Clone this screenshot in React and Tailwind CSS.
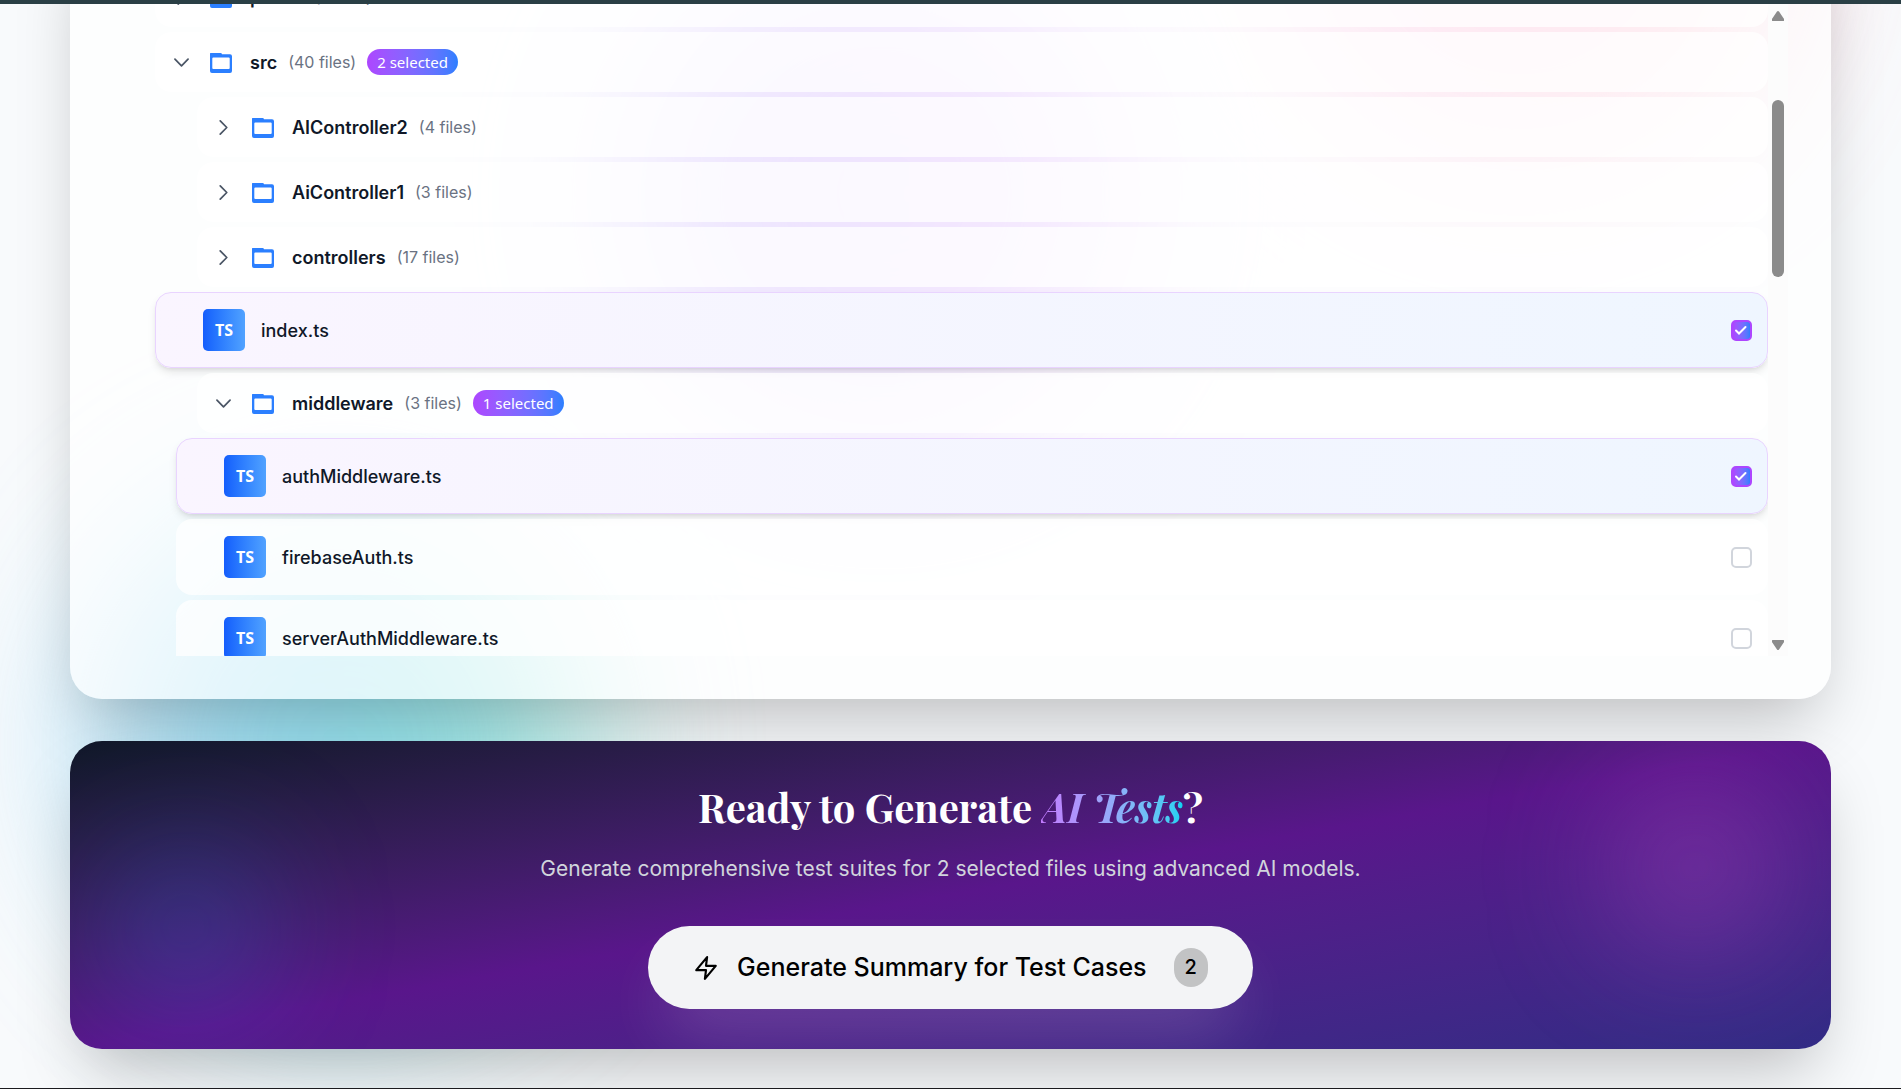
import { useState } from "react";
import { HiOutlineChevronDown, HiOutlineChevronRight } from "react-icons/hi2";

const ENTRIES = [
  { type: "folder", name: "public", count: 5, depth: 0 },
  { type: "folder", name: "src", count: 40, depth: 0, open: true, selected: 2 },
  { type: "folder", name: "AIController2", count: 4, depth: 1 },
  { type: "folder", name: "AiController1", count: 3, depth: 1 },
  { type: "folder", name: "controllers", count: 17, depth: 1 },
  { type: "file", name: "index.ts", depth: 0, checked: true },
  { type: "folder", name: "middleware", count: 3, depth: 1, open: true, selected: 1 },
  { type: "file", name: "authMiddleware.ts", depth: 1, checked: true },
  { type: "file", name: "firebaseAuth.ts", depth: 1 },
  { type: "file", name: "serverAuthMiddleware.ts", depth: 1 },
];

function FolderIcon() {
  return (
    <svg viewBox="0 0 26 26" className="size-[26px] shrink-0 fill-[#2b7fff]" aria-hidden="true">
      <path
        fillRule="evenodd"
        d="M2.500 4h10a1.500 1.500 0 0 1 1.500 1.300H22a2 2 0 0 1 2 2V22a2 2 0 0 1-2 2H4a2 2 0 0 1-2-2V4.500a.5.5 0 0 1 .5-.5zM5.300 8.500a1 1 0 0 0-1 1v9.500a1 1 0 0 0 1 1h15.400a1 1 0 0 0 1-1v-9.500a1 1 0 0 0-1-1z"
      />
    </svg>
  );
}

function BoltIcon() {
  return (
    <svg viewBox="0 0 24 24" className="size-[26px] shrink-0 fill-none stroke-black stroke-2" strokeLinejoin="round" aria-hidden="true">
      <path d="M13 2 3 14h9l-1 8 10-12h-9z" />
    </svg>
  );
}

function FolderRow({ name, count, depth, open, selected }) {
  const Chevron = open ? HiOutlineChevronDown : HiOutlineChevronRight;
  return (
    <button
      type="button"
      aria-expanded={Boolean(open)}
      className={`flex h-[60px] shrink-0 items-center gap-4 rounded-2xl bg-white/75 px-4 text-left ${depth ? "ml-[42px]" : ""}`}
    >
      <Chevron className="size-[21px] shrink-0 stroke-2 text-[#4a5565]" />
      <FolderIcon />
      <span className="flex items-center gap-[11px]">
        <span className="text-[18px] font-semibold text-[#101828]">{name}</span>
        <span className="text-[16px] text-[#6a7282]">({count} files)</span>
        {selected && (
          <span className="rounded-full bg-linear-to-r from-[#ad46ff] to-[#2b7fff] px-2.5 font-['Noto_Sans',sans-serif] text-[15px] leading-[26px] text-white">
            {selected} selected
          </span>
        )}
      </span>
    </button>
  );
}

function FileRow({ name, depth, checked, onToggle }) {
  return (
    <label
      className={`flex h-[76px] shrink-0 items-center gap-4 rounded-2xl border pr-[15px] pl-[47px] ${depth ? "ml-[21px]" : ""} ${
        checked
          ? "border-[#e9d4ff] bg-linear-to-r from-[#faf5ff] to-[#eff6ff] shadow-[0_5px_8px_-1px_rgba(0,0,0,0.1),0_3px_5px_-3px_rgba(0,0,0,0.1)]"
          : "border-transparent bg-white/75"
      }`}
    >
      <span className="flex size-[42px] shrink-0 items-center justify-center rounded-[5px] bg-linear-to-r from-[#155dfc] to-[#51a2ff] font-['Open_Sans',sans-serif] text-[16px] font-bold text-white">
        TS
      </span>
      <span className="grow text-[18px] font-medium text-[#101828]">{name}</span>
      <span className="relative flex size-[21px] shrink-0">
        <input
          type="checkbox"
          checked={checked}
          onChange={onToggle}
          className="size-[21px] appearance-none rounded-[5px] border-2 border-[#d1d5dc] bg-white checked:border-[#ad46ff] checked:bg-linear-to-r checked:from-[#ad46ff] checked:to-[#2b7fff]"
        />
        {checked && (
          <svg viewBox="0 0 21 21" className="pointer-events-none absolute inset-0 fill-none stroke-white stroke-2" strokeLinecap="round" aria-hidden="true">
            <path d="m5 10.500 3 3 6.500-6.500" />
          </svg>
        )}
      </span>
    </label>
  );
}

function Scrollbar() {
  return (
    <div className="flex w-5 shrink-0 flex-col items-center bg-[#fcfcfc]" aria-hidden="true">
      <svg viewBox="0 0 12 10" className="mt-11 h-[10px] w-3 fill-[#8b8b8b]">
        <path d="M5 .6a1.300 1.300 0 0 1 2 0l4.700 7A1.300 1.300 0 0 1 10.800 10H1.200A1.300 1.300 0 0 1 .3 7.600z" />
      </svg>
      <div className="mt-[79px] h-[177px] w-3 rounded-full bg-[#8b8b8b]" />
      <div className="grow" />
      <svg viewBox="0 0 12 10" className="mb-[6px] h-[10px] w-3 rotate-180 fill-[#8b8b8b]">
        <path d="M5 .6a1.300 1.300 0 0 1 2 0l4.700 7A1.300 1.300 0 0 1 10.800 10H1.200A1.300 1.300 0 0 1 .3 7.600z" />
      </svg>
    </div>
  );
}

function Backdrop() {
  return (
    <div className="pointer-events-none absolute inset-0" aria-hidden="true">
      <div className="absolute -top-[60px] left-[630px] size-[500px] rounded-full bg-linear-to-r from-[#a78bfa] to-[#dc9cfb] opacity-80 blur-[84px]" />
      <div className="absolute -top-[330px] right-[130px] size-[500px] rounded-full bg-linear-to-r from-[#f99bd8] to-[#fda4af] opacity-75 blur-[84px]" />
      <div className="absolute top-[490px] left-[90px] size-[500px] rounded-full bg-linear-to-r from-[#8fd0f7] via-[#67d6ea] to-[#7fe6d0] opacity-70 blur-[84px]" />
    </div>
  );
}

export default function App() {
  const [entries, setEntries] = useState(ENTRIES);
  const toggle = (name) =>
    setEntries((list) => list.map((e) => (e.name === name ? { ...e, checked: !e.checked } : e)));
  const total = entries.filter((e) => e.checked).length;

  return (
    <div className="flex min-h-screen flex-col bg-[#f8fafc] font-[Inter,sans-serif]">
      <header className="h-1 bg-[#2a3f45]" />
      <main className="relative grow overflow-hidden px-[70px] pb-[38px]">
        <Backdrop />

        <section className="relative -mt-20 rounded-[32px] bg-white/70 px-[43px] pt-[43px] pb-[43px] shadow-[0_33px_66px_-16px_rgba(0,0,0,0.25)]">
          <div className="flex h-[689px] overflow-hidden">
            <div className="flex grow flex-col gap-[5px] overflow-hidden pl-[42px]">
              {entries.map((e) =>
                e.type === "folder" ? (
                  <FolderRow key={e.name} {...e} />
                ) : (
                  <FileRow key={e.name} {...e} checked={Boolean(e.checked)} onToggle={() => toggle(e.name)} />
                )
              )}
            </div>
            <Scrollbar />
          </div>
        </section>

        <section className="relative mt-[42px] rounded-[32px] shadow-[0_33px_66px_-16px_rgba(0,0,0,0.25)]">
          <div className="relative flex flex-col items-center overflow-hidden rounded-[32px] bg-linear-to-br from-[#101828] via-[#59168b] to-[#312c85] px-10 pt-10 pb-10 text-center">
            <div className="absolute top-[42px] right-[52px] size-[168px] rounded-full bg-[#c84fd0]/35 blur-[64px]" aria-hidden="true" />
            <div className="absolute bottom-[38px] left-[32px] size-[168px] rounded-full bg-[#2b7fff]/25 blur-[64px]" aria-hidden="true" />
            <h2 className="relative font-['Playfair_Display','Liberation_Serif',serif] text-[40px] leading-[52px] font-bold text-white [font-variant-ligatures:none]">
              Ready to Generate{" "}
              <span className="bg-linear-to-r from-[#c27aff] to-[#00d3f2] bg-clip-text text-transparent italic">AI Tests</span>?
            </h2>
            <p className="relative mt-5 text-[21px] leading-8 text-[#d1d5dc]">
              Generate comprehensive test suites for {total} selected files using advanced AI models.
            </p>
            <button
              type="button"
              className="relative mt-[41px] flex h-[83px] items-center rounded-full bg-[#f3f4f6] px-[45px] text-[25px] font-medium text-black shadow-[0_33px_66px_-16px_rgba(255,255,255,0.2)]"
            >
              <BoltIcon />
              <span className="ml-[18px]">Generate Summary for Test Cases</span>
              <span className="ml-[27px] rounded-full bg-black/20 px-[11px] text-[20px] leading-[39px]">{total}</span>
            </button>
          </div>
        </section>
      </main>
      <footer className="h-px bg-[#1b1b1f]" />
    </div>
  );
}
